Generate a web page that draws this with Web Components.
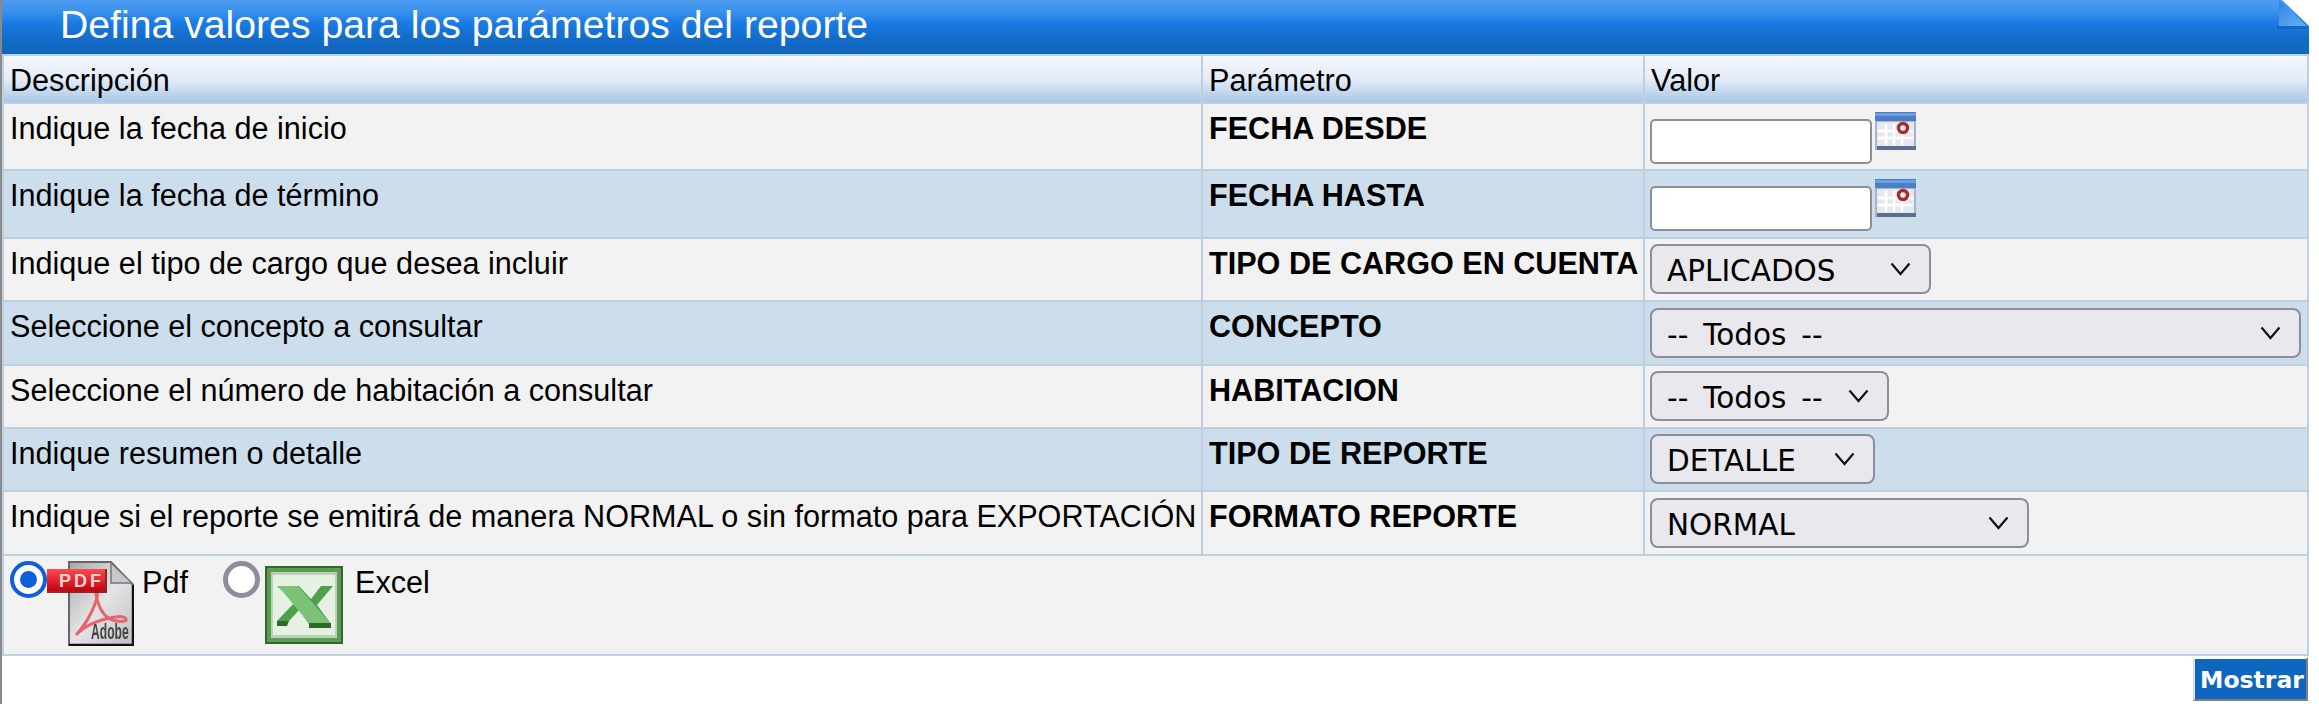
<!DOCTYPE html>
<html lang="es">
<head>
<meta charset="utf-8">
<title>Parámetros del reporte</title>
<style>
    html, body { margin: 0; background: #fff; }
    body { font-family: "Liberation Sans", Arial, sans-serif; font-size: 30.6px; color: #000; }
</style>
</head>
<body>
<report-panel heading="Defina valores para los parámetros del reporte">
    <param-row desc="Indique la fecha de inicio" param="FECHA DESDE" height="65"><date-field></date-field></param-row>
    <param-row desc="Indique la fecha de término" param="FECHA HASTA" height="66" alt><date-field></date-field></param-row>
    <param-row desc="Indique el tipo de cargo que desea incluir" param="TIPO DE CARGO EN CUENTA" height="61"><select-field width="281" style="margin-top:5px">APLICADOS</select-field></param-row>
    <param-row desc="Seleccione el concepto a consultar" param="CONCEPTO" height="62" alt><select-field width="651" style="margin-top:6px">-- Todos --</select-field></param-row>
    <param-row desc="Seleccione el número de habitación a consultar" param="HABITACION" height="61"><select-field width="239" style="margin-top:5px">-- Todos --</select-field></param-row>
    <param-row desc="Indique resumen o detalle" param="TIPO DE REPORTE" height="61" alt><select-field width="225" style="margin-top:5px">DETALLE</select-field></param-row>
    <param-row desc="Indique si el reporte se emitirá de manera NORMAL o sin formato para EXPORTACIÓN" param="FORMATO REPORTE" height="62"><select-field width="379" style="margin-top:6px">NORMAL</select-field></param-row>
    <format-choice></format-choice>
    <action-button slot="footer">Mostrar</action-button>
</report-panel>

<script>
(function() {
    "use strict";

    class reportPanel extends HTMLElement {
        constructor() {
            super();
            let shadowRoot = this.attachShadow({mode: 'open'});
            shadowRoot.innerHTML = `
                <style>
                    :host { display: block; border-left: 2px solid #8a8a8a; width: 2307px; height: 704px; box-sizing: content-box; }
                    .title { position: relative; height: 54px; box-sizing: border-box; padding: 3px 0 0 58px;
                        background: linear-gradient(#4c9cf0 0, #3e92ec 20%, #1a7be6 42%, #136cc9 70%, #1166bc 100%);
                        color: #fff; font-size: 39.2px; line-height: 44px; }
                    .fold { position: absolute; top: 0; right: 0; width: 34px; height: 30px; }
                    .body { border: solid #c0cfdf; border-width: 2px 2px 2px 2px; }
                    .cols { display: grid; grid-template-columns: 1197px 442px 1fr; height: 46px;
                        background: linear-gradient(#f3f7fd, #e4ecf8 50%, #a9c8e8); border-bottom: 2px solid #c0cfdf; }
                    .cols div { padding: 7px 0 0 6px; line-height: 34px; border-left: 2px solid #c0cfdf; }
                    .cols div:first-child { border-left: 0; }
                    .foot { display: flex; justify-content: flex-end; padding: 1px 1px 0 0; }
                </style>
                <div class="title"><span id="heading"></span>
                    <svg class="fold" viewBox="0 0 34 30">
                        <defs><linearGradient id="f" x1="0" y1="0" x2="1" y2="1"><stop offset="0" stop-color="#2f86e6"/><stop offset="1" stop-color="#6aaef2"/></linearGradient></defs>
                        <rect x="2" y="26" width="30" height="3" fill="#0f5aa8" opacity=".5"/>
                        <path d="M4 0 L4 26 L32 26 Z" fill="url(#f)"/>
                        <path d="M7 0 L34 0 L34 26 Z" fill="#fff"/>
                    </svg>
                </div>
                <div class="body">
                    <div class="cols"><div>Descripción</div><div>Parámetro</div><div>Valor</div></div>
                    <slot></slot>
                </div>
                <div class="foot"><slot name="footer"></slot></div>
            `;
            shadowRoot.getElementById('heading').textContent = this.getAttribute('heading');
        }
    }

    class paramRow extends HTMLElement {
        constructor() {
            super();
            let shadowRoot = this.attachShadow({mode: 'open'});
            shadowRoot.innerHTML = `
                <style>
                    :host { display: grid; grid-template-columns: 1197px 442px 1fr; background: #f2f2f2; border-bottom: 2px solid #c0cfdf; }
                    :host([alt]) { background: #ccdeec; }
                    div { line-height: 34px; padding: 7px 0 0 6px; white-space: nowrap; box-sizing: border-box; }
                    .param { font-weight: bold; border-left: 2px solid #c0cfdf; }
                    .value { border-left: 2px solid #c0cfdf; padding: 0 0 0 5px; }
                </style>
                <div id="desc"></div>
                <div id="param" class="param"></div>
                <div class="value"><slot></slot></div>
            `;
            shadowRoot.getElementById('desc').textContent = this.getAttribute('desc');
            shadowRoot.getElementById('param').textContent = this.getAttribute('param');
            this.style.height = this.getAttribute('height') + 'px';
        }
    }

    class dateField extends HTMLElement {
        constructor() {
            super();
            let shadowRoot = this.attachShadow({mode: 'open'});
            shadowRoot.innerHTML = `
                <style>
                    :host { display: flex; align-items: flex-start; gap: 3px; }
                    input { display: block; width: 222px; height: 45px; box-sizing: border-box; margin: 15px 0 0; padding: 0 4px;
                        background: #fff; border: 2px solid #8f8d9b; border-radius: 5px; font: inherit; }
                    svg { display: block; margin-top: 8px; filter: blur(.5px); }
                </style>
                <input type="text" value="">
                <svg width="41" height="38" viewBox="0 0 41 38">
                    <rect width="41" height="38" fill="#a3b4cc"/>
                    <rect width="41" height="9" fill="#4a7fc8"/>
                    <rect y="1" width="41" height="3" fill="#6c9fe0"/>
                    <rect x="2" y="10" width="37" height="24" fill="#e6e8ee"/>
                    <path d="M3 19h35M3 26h35M11 12v21M19 12v21M27 12v21" stroke="#fff" stroke-width="2.5"/>
                    <rect x="2" y="34" width="39" height="4" fill="#5c6f90"/>
                    <circle cx="28" cy="16" r="4.5" fill="none" stroke="#a82a2e" stroke-width="3.4"/>
                </svg>
            `;
        }
    }

    class selectField extends HTMLElement {
        constructor() {
            super();
            let shadowRoot = this.attachShadow({mode: 'open'});
            shadowRoot.innerHTML = `
                <style>
                    :host { display: flex; align-items: center; justify-content: space-between; box-sizing: border-box; height: 50px;
                        padding: 0 18px 0 15px; background: #e9e8ed; border: 2px solid #8f8d9b; border-radius: 8px;
                        font-family: "DejaVu Sans", Verdana, sans-serif; font-size: 29.5px; word-spacing: 5.5px; white-space: nowrap; }
                    span { position: relative; top: 2px; }
                    svg { display: block; flex: none; }
                </style>
                <span><slot></slot></span>
                <svg width="21" height="14" viewBox="0 0 21 14"><path d="M1.5 1.5 L10.5 12 L19.5 1.5" fill="none" stroke="#111" stroke-width="2.2"/></svg>
            `;
            this.style.width = this.getAttribute('width') + 'px';
        }
    }

    class formatChoice extends HTMLElement {
        constructor() {
            super();
            let shadowRoot = this.attachShadow({mode: 'open'});
            shadowRoot.innerHTML = `
                <style>
                    :host { display: flex; align-items: flex-start; height: 98px; box-sizing: border-box; padding: 5px 0 0 6px; background: #f2f2f2; }
                    .radio { width: 37px; height: 37px; box-sizing: border-box; border-radius: 50%; background: #fff; border: 5px solid #8f8d9b; flex: none; }
                    .radio.on { border: 4px solid #0f5fdc; display: flex; align-items: center; justify-content: center; }
                    .radio.on::after { content: ""; width: 17px; height: 17px; border-radius: 50%; background: #0f5fdc; }
                    .label { line-height: 34px; margin-top: 4px; }
                    svg { display: block; flex: none; filter: blur(.5px); }
                </style>
                <span class="radio on"></span>
                <svg width="87" height="85" viewBox="0 0 87 85">
                    <defs>
                        <linearGradient id="paper" x1="0" y1="0" x2="1" y2="1"><stop offset="0" stop-color="#a8a8ac"/><stop offset=".5" stop-color="#e4e4e6"/><stop offset="1" stop-color="#c0c0c4"/></linearGradient>
                        <linearGradient id="red" x1="0" y1="0" x2="0" y2="1"><stop offset="0" stop-color="#ff4a4e"/><stop offset="1" stop-color="#c4000c"/></linearGradient>
                    </defs>
                    <path d="M22 1 H64 L86 24 V84 H22 Z" fill="url(#paper)" stroke="#666" stroke-width="2"/>
                    <path d="M86 24 V84 H22" fill="none" stroke="#111" stroke-width="2.4"/>
                    <path d="M64 2 V22 H85 Z" fill="#c9c9cd" stroke="#777" stroke-width="1.5"/>
                    <path d="M29 74 C42 60 52 38 50 30 C49 24 47 32 52 44 C56 56 66 62 78 60 C82 58 76 54 68 56 C56 58 40 62 29 74 Z" fill="none" stroke="#e8636c" stroke-width="3"/>
                    <rect x="0" y="8" width="60" height="24" fill="#7c0a10" opacity=".85"/>
                    <rect x="0" y="8" width="58" height="22" fill="url(#red)"/>
                    <text x="12" y="26" font-family="'Liberation Sans', sans-serif" font-weight="bold" font-size="18" letter-spacing="3" fill="#ffd4d4">PDF</text>
                    <text transform="translate(44 78) scale(.55 1)" font-family="'Liberation Sans', sans-serif" font-weight="bold" font-size="22" fill="#444">Adobe</text>
                </svg>
                <span class="label" style="margin-left:8px;width:81px">Pdf</span>
                <span class="radio"></span>
                <svg width="78" height="78" viewBox="0 0 78 78" style="margin:5px 0 0 5px">
                    <rect width="78" height="78" rx="2" fill="#5f9a56"/>
                    <rect x="1" y="1" width="76" height="76" fill="none" stroke="#2f6a2a" stroke-width="2"/>
                    <rect x="6" y="6" width="66" height="66" fill="#b9d3b4"/>
                    <rect x="8" y="9" width="62" height="60" fill="#e6f1e3"/>
                    <path d="M12 20 H34 L46 33 L56 20 H68 L52 39 L66 58 H44 L34 44 L24 55 H12 L30 36 Z" fill="#4ea14c"/>
                    <path d="M13 20 H33 L65 57 H44 Z" fill="#7cc278"/>
                    <path d="M12 55 H24 L22 60 H12 Z M44 57 H66 V62 H44 Z" fill="#2c6a2c"/>
                </svg>
                <span class="label" style="margin-left:12px">Excel</span>
            `;
        }
    }

    class actionButton extends HTMLElement {
        constructor() {
            super();
            let shadowRoot = this.attachShadow({mode: 'open'});
            shadowRoot.innerHTML = `
                <style>
                    :host { display: flex; align-items: center; justify-content: center; box-sizing: border-box; width: 115px; height: 44px; padding: 1px 0 0 3px;
                        background: #0f66bf; color: #fff; border: 2px solid; border-color: #fff #808080 #808080 #e0e0e0;
                        font-family: "DejaVu Sans", Verdana, sans-serif; font-weight: bold; font-size: 23.5px; }
                </style>
                <slot></slot>
            `;
        }
    }

    window.customElements.define('report-panel', reportPanel);
    window.customElements.define('param-row', paramRow);
    window.customElements.define('date-field', dateField);
    window.customElements.define('select-field', selectField);
    window.customElements.define('format-choice', formatChoice);
    window.customElements.define('action-button', actionButton);
})();
</script>
</body>
</html>
